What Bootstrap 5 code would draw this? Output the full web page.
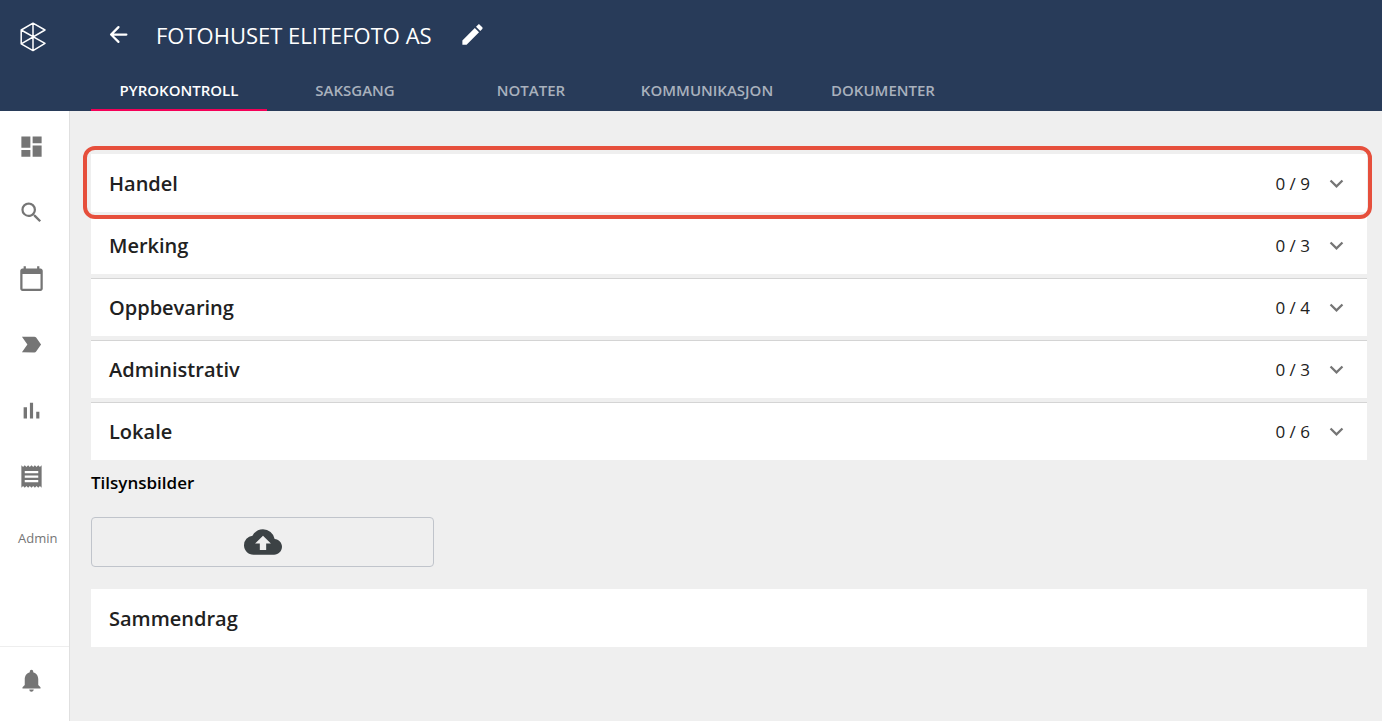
<!DOCTYPE html>
<html lang="no">
<head>
<meta charset="utf-8">
<meta name="viewport" content="width=device-width, initial-scale=1">
<title>Fotohuset Elitefoto AS – Pyrokontroll</title>
<link href="https://cdn.jsdelivr.net/npm/bootstrap@5.3.0/dist/css/bootstrap.min.css" rel="stylesheet">
<style>
  body { font-family: "Open Sans", "Noto Sans", sans-serif; background: #efefef; color: #212121; }
  svg { display: block; fill: currentColor; flex: none; }
  .icon { width: 27px; height: 27px; }
  .topbar { background: #283b59; height: 111px; }
  .brand-cell { width: 70px; padding: 22px 0 0 18px; }
  .title-row { height: 69px; padding-left: 35px; }
  .title-row h1 { font-size: 22px; line-height: 32px; margin: 0 27px 0 24px; }
  .icon-btn { border: 0; background: none; padding: 0; color: #fff; }
  .tabs { margin-left: 21px; height: 42px; }
  .tabs .nav-link { width: 176px; height: 42px; padding: 0; line-height: 42px; font-size: 15px; font-weight: 600; text-align: center; color: #a9b1bd; border-bottom: 2px solid transparent; white-space: nowrap; }
  .tabs .nav-link.active { color: #fff; border-bottom-color: #f50057; }
  .sidebar { width: 70px; border-right: 1px solid #e0e0e0; color: #757575; }
  .sidebar a { color: inherit; text-decoration: none; }
  .side-icon { display: flex; align-items: center; height: 66px; padding-left: 18px; }
  .admin-link { font-size: 13px; line-height: 20px; padding: 19px 0 0 18px; display: block; }
  .bell-cell { border-top: 1px solid #eee; height: 75px; padding-bottom: 8px; }
  .side-top { padding-top: 2px; }
  .content { padding: 43px 15px 43px 21px; }
  .panel-row { background: #fff; border: 0; border-top: 1px solid #d4d4d4; height: 58px; padding: 0 17px 0 18px; color: inherit; text-align: left; }
  .panel-title { font-size: 20px; line-height: 28px; font-weight: 600; }
  .panel-count { font-size: 17px; line-height: 24px; margin-right: 13px; }
  .chev { color: #757575; }
  .panels { gap: 4px; }
  .plain { border-top-color: #fff; }
  .marker { position: absolute; inset: -8px -5px -7px -8px; border: 4px solid #e64f3c; border-radius: 12px; pointer-events: none; z-index: 1; }
  .images-title { font-size: 17px; line-height: 24px; font-weight: 600; color: #000; margin: 11px 0 22px; }
  .upload { width: 343px; max-width: 100%; height: 50px; border: 1px solid #c0c4cb; border-radius: 4px; background: none; color: #3c4245; margin-bottom: 22px; }
</style>
</head>
<body class="d-flex flex-column min-vh-100">
<header class="topbar d-flex text-white">
  <a class="brand-cell text-white" href="#" aria-label="Hjem">
    <svg width="30" height="30" viewBox="0 0 30 30" style="fill:none" stroke="currentColor" stroke-width="1.5" stroke-linejoin="round" stroke-linecap="round">
      <path d="M15 1.2V28.6M15 1.2L3.2 8V21.8L15 28.6L27 21.4L3.2 8M15 1.2L27 8L3.2 21.8"/>
    </svg>
  </a>
  <div class="flex-grow-1">
    <div class="title-row d-flex align-items-center">
      <button class="icon-btn" type="button" aria-label="Tilbake">
        <svg class="icon" viewBox="0 0 24 24"><path d="M19 11H7.83l4.88-4.88c.39-.39.39-1.03 0-1.42a1 1 0 0 0-1.41 0l-6.59 6.59a1 1 0 0 0 0 1.41l6.59 6.59a1 1 0 0 0 1.41-1.41L7.83 13H19a1 1 0 0 0 0-2z"/></svg>
      </button>
      <h1>FOTOHUSET ELITEFOTO AS</h1>
      <button class="icon-btn" type="button" aria-label="Rediger">
        <svg class="icon" viewBox="0 0 24 24"><path d="M3 17.25V21h3.75L17.81 9.94l-3.75-3.75L3 17.25zM20.71 7.04c.39-.39.39-1.02 0-1.41l-2.34-2.34c-.39-.39-1.02-.39-1.41 0l-1.83 1.83 3.75 3.75 1.83-1.83z"/></svg>
      </button>
    </div>
    <nav class="nav tabs flex-nowrap">
      <a class="nav-link active" aria-current="page" href="#">PYROKONTROLL</a>
      <a class="nav-link" href="#">SAKSGANG</a>
      <a class="nav-link" href="#">NOTATER</a>
      <a class="nav-link" href="#">KOMMUNIKASJON</a>
      <a class="nav-link" href="#">DOKUMENTER</a>
    </nav>
  </div>
</header>
<div class="d-flex flex-grow-1">
  <nav class="sidebar bg-white d-flex flex-column flex-shrink-0" aria-label="Hovedmeny">
    <div class="side-top">
      <a class="side-icon" href="#" aria-label="Oversikt"><svg class="icon" viewBox="0 0 24 24"><path d="M3 13h8V3H3v10zm0 8h8v-6H3v6zm10 0h8V11h-8v10zm0-18v6h8V3h-8z"/></svg></a>
      <a class="side-icon" href="#" aria-label="Søk"><svg class="icon" viewBox="0 0 24 24"><path d="M15.5 14h-.79l-.28-.27A6.471 6.471 0 0 0 16 9.5 6.5 6.5 0 1 0 9.5 16c1.61 0 3.09-.59 4.23-1.57l.27.28v.79l5 4.99L20.49 19l-4.99-5zm-6 0C7.01 14 5 11.99 5 9.5S7.01 5 9.5 5 14 7.01 14 9.5 11.99 14 9.5 14z"/></svg></a>
      <a class="side-icon" href="#" aria-label="Kalender"><svg class="icon" viewBox="0 0 24 24"><path d="M20 3h-1V1h-2v2H7V1H5v2H4c-1.1 0-2 .9-2 2v16c0 1.1.9 2 2 2h16c1.1 0 2-.9 2-2V5c0-1.100-.9-2-2-2zm0 18H4V8h16v13z"/></svg></a>
      <a class="side-icon" href="#" aria-label="Saker"><svg class="icon" viewBox="0 0 24 24"><path d="M3.500 18.990l11 .01c.67 0 1.270-.33 1.630-.84L20.500 12l-4.370-6.160c-.36-.51-.96-.84-1.630-.84l-11 .01L8.340 12 3.500 18.990z"/></svg></a>
      <a class="side-icon" href="#" aria-label="Statistikk"><svg class="icon" viewBox="0 0 24 24"><path d="M5 9.200h3V19H5zM10.600 5h2.800v14h-2.800zm5.600 8H19v6h-2.800z"/></svg></a>
      <a class="side-icon" href="#" aria-label="Rapporter"><svg class="icon" viewBox="0 0 24 24"><path d="M18 17H6v-2h12v2zm0-4H6v-2h12v2zm0-4H6V7h12v2zM3 22l1.500-1.500L6 22l1.500-1.500L9 22l1.500-1.500L12 22l1.500-1.500L15 22l1.500-1.500L18 22l1.500-1.500L21 22V2l-1.500 1.500L18 2l-1.500 1.500L15 2l-1.500 1.500L12 2l-1.500 1.500L9 2 7.500 3.500 6 2 4.500 3.500 3 2v20z"/></svg></a>
      <a class="admin-link" href="#">Admin</a>
    </div>
    <div class="bell-cell mt-auto d-flex">
      <a class="side-icon h-100" href="#" aria-label="Varsler"><svg class="icon" viewBox="0 0 24 24"><path d="M12 22c1.100 0 2-.9 2-2h-4a2 2 0 0 0 2 2zm6-6v-5c0-3.070-1.640-5.640-4.500-6.320V4c0-.83-.67-1.500-1.500-1.500s-1.500.67-1.500 1.500v.68C7.630 5.360 6 7.920 6 11v5l-2 2v1h16v-1l-2-2z"/></svg></a>
    </div>
  </nav>
  <main class="content flex-grow-1">
    <div class="panels d-flex flex-column">
      <div class="position-relative">
        <button class="panel-row plain d-flex align-items-center w-100" type="button" aria-expanded="false"><span class="panel-title me-auto">Handel</span><span class="panel-count">0 / 9</span><svg class="icon chev" viewBox="0 0 24 24"><path d="M16.590 8.590L12 13.170 7.410 8.590 6 10l6 6 6-6z"/></svg></button>
        <div class="marker"></div>
      </div>
      <button class="panel-row d-flex align-items-center w-100" type="button" aria-expanded="false"><span class="panel-title me-auto">Merking</span><span class="panel-count">0 / 3</span><svg class="icon chev" viewBox="0 0 24 24"><path d="M16.590 8.590L12 13.170 7.410 8.590 6 10l6 6 6-6z"/></svg></button>
      <button class="panel-row d-flex align-items-center w-100" type="button" aria-expanded="false"><span class="panel-title me-auto">Oppbevaring</span><span class="panel-count">0 / 4</span><svg class="icon chev" viewBox="0 0 24 24"><path d="M16.590 8.590L12 13.170 7.410 8.590 6 10l6 6 6-6z"/></svg></button>
      <button class="panel-row d-flex align-items-center w-100" type="button" aria-expanded="false"><span class="panel-title me-auto">Administrativ</span><span class="panel-count">0 / 3</span><svg class="icon chev" viewBox="0 0 24 24"><path d="M16.590 8.590L12 13.170 7.410 8.590 6 10l6 6 6-6z"/></svg></button>
      <button class="panel-row d-flex align-items-center w-100" type="button" aria-expanded="false"><span class="panel-title me-auto">Lokale</span><span class="panel-count">0 / 6</span><svg class="icon chev" viewBox="0 0 24 24"><path d="M16.590 8.590L12 13.170 7.410 8.590 6 10l6 6 6-6z"/></svg></button>
    </div>
    <h2 class="images-title">Tilsynsbilder</h2>
    <button class="upload d-flex align-items-center justify-content-center" type="button" aria-label="Last opp bilde">
      <svg width="38" height="38" viewBox="0 0 24 24"><path d="M19.350 10.040A7.490 7.490 0 0 0 12 4C9.110 4 6.600 5.640 5.350 8.040A5.994 5.994 0 0 0 0 14c0 3.310 2.690 6 6 6h13c2.760 0 5-2.240 5-5 0-2.640-2.050-4.780-4.650-4.960zM14 13v4h-4v-4H7l5-5 5 5h-3z"/></svg>
    </button>
    <section class="panel-row plain d-flex align-items-center">
      <h2 class="panel-title mb-0">Sammendrag</h2>
    </section>
  </main>
</div>
<script src="https://cdn.jsdelivr.net/npm/bootstrap@5.3.0/dist/js/bootstrap.bundle.min.js"></script>
</body>
</html>
